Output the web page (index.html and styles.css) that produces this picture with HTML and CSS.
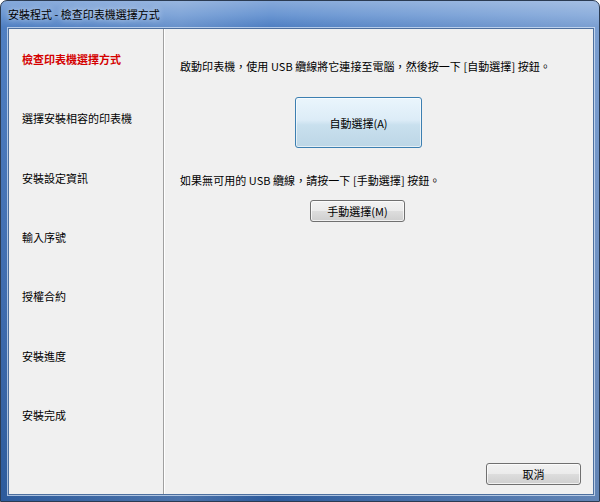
FILE: index.html
```html
<!DOCTYPE html>
<html lang="zh-Hant">
<head>
<meta charset="utf-8">
<title>安裝程式</title>
<link rel="stylesheet" href="styles.css">
</head>
<body>
<div class="window">
  <div class="titlebar">安裝程式 - 檢查印表機選擇方式</div>
  <div class="client">
    <ul class="steps">
      <li class="step active">檢查印表機選擇方式</li>
      <li class="step">選擇安裝相容的印表機</li>
      <li class="step">安裝設定資訊</li>
      <li class="step">輸入序號</li>
      <li class="step">授權合約</li>
      <li class="step">安裝進度</li>
      <li class="step">安裝完成</li>
    </ul>
    <div class="divider"></div>
    <div class="content">
      <p class="msg msg-first">啟動印表機，使用 USB 纜線將它連接至電腦，然後按一下 [自動選擇] 按鈕。</p>
      <button class="btn btn-auto">自動選擇(A)</button>
      <p class="msg msg-second">如果無可用的 USB 纜線，請按一下 [手動選擇] 按鈕。</p>
      <button class="btn btn-manual">手動選擇(M)</button>
      <button class="btn btn-cancel">取消</button>
    </div>
  </div>
</div>
</body>
</html>
```
FILE: styles.css
```css
* { box-sizing: border-box; }
html, body { margin: 0; padding: 0; }
body {
  width: 600px;
  height: 502px;
  overflow: hidden;
  background: #ffffff;
  font-family: "Noto Sans CJK TC", "Liberation Sans", sans-serif;
  font-size: 11px;
  color: #000;
}
.window {
  width: 600px;
  height: 502px;
  display: flex;
  flex-direction: column;
  border: 1px solid #2b3b52;
  border-radius: 7px 7px 0 0;
  background:
    linear-gradient(90deg, rgba(255,255,255,0) 0%, rgba(255,255,255,0.15) 30%, rgba(255,255,255,0) 45%, rgba(255,255,255,0.08) 60%, rgba(255,255,255,0.25) 100%),
    linear-gradient(180deg, #86a9da 0px, #6a96d2 14px, #4f7fc2 26px, #3f6cae 60%, #2d5b9c 100%);
  overflow: hidden;
}
.titlebar {
  height: 27px;
  padding: 5px 0 0 7px;
  line-height: 16px;
  font-size: 11px;
  color: #000;
  text-shadow: 0 0 6px rgba(255,255,255,0.9);
  flex: none;
}
.client {
  flex: 1;
  margin: 0 5px 6px 7px;
  border: 1px solid #4d6f9e;
  box-shadow: 0 0 0 1px rgba(220,232,248,0.7);
  background: #f0f0f0;
  display: flex;
}
.steps {
  list-style: none;
  margin: 0;
  padding: 1px 0 0 0;
  width: 154px;
  flex: none;
}
.step {
  height: 59.33px;
  line-height: 59px;
  padding-left: 13px;
  white-space: nowrap;
}
.step.active {
  color: #d40000;
  font-weight: bold;
}
.divider {
  width: 2px;
  flex: none;
  border-left: 1px solid #a0a0a0;
  border-right: 1px solid #ffffff;
}
.content {
  flex: 1;
  display: flex;
  flex-direction: column;
  align-items: flex-start;
  padding: 29px 12px 9px 15px;
}
.msg {
  margin: 0;
  line-height: 16px;
  white-space: nowrap;
  letter-spacing: 0.05px;
}
.btn {
  font-family: inherit;
  font-size: 11px;
  color: #000;
  padding: 0;
  border-radius: 3px;
  cursor: default;
}
.btn-auto {
  margin: 23px 0 0 115px;
  width: 127px;
  height: 51px;
  border: 1px solid #3c7fb1;
  background: linear-gradient(180deg, #eaf5fc 0%, #dcecf7 45%, #c9e0ee 55%, #bcd6e6 100%);
  box-shadow: inset 0 0 0 1px rgba(255,255,255,0.6);
}
.msg-second {
  margin-top: 24px;
}
.btn-manual {
  margin: 12px 0 0 130px;
  width: 95px;
  height: 22px;
  border: 1px solid #707070;
  background: linear-gradient(180deg, #f2f2f2 0%, #ebebeb 50%, #dddddd 51%, #cfcfcf 100%);
  box-shadow: inset 0 0 0 1px rgba(255,255,255,0.7);
}
.btn-cancel {
  margin-top: auto;
  align-self: flex-end;
  width: 95px;
  height: 22px;
  border: 1px solid #707070;
  background: linear-gradient(180deg, #f2f2f2 0%, #ebebeb 50%, #dddddd 51%, #cfcfcf 100%);
  box-shadow: inset 0 0 0 1px rgba(255,255,255,0.7);
}
```
